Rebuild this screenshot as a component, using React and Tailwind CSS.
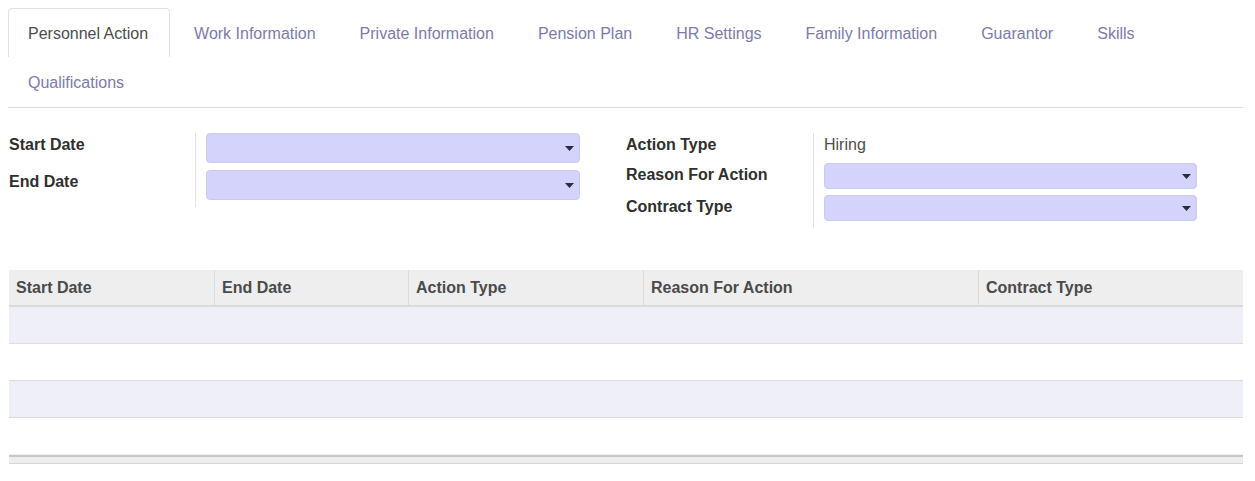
import React from "react";

const tabs = [
  "Personnel Action",
  "Work Information",
  "Private Information",
  "Pension Plan",
  "HR Settings",
  "Family Information",
  "Guarantor",
  "Skills",
  "Qualifications",
];

function Caret() {
  return (
    <svg width="9" height="5" viewBox="0 0 9 5" className="block">
      <path d="M0 0 L9 0 L4.5 5 Z" fill="#2b2b45" />
    </svg>
  );
}

function SelectBox({ h, w }) {
  return (
    <div
      className={`${h} ${w} rounded-[4px] bg-[#d3d3fb] border border-[#c9c9f2] flex items-center justify-end pr-[5px]`}
    >
      <Caret />
    </div>
  );
}

const cols = [
  { label: "Start Date", w: "w-[205px]" },
  { label: "End Date", w: "w-[194px]" },
  { label: "Action Type", w: "w-[235px]" },
  { label: "Reason For Action", w: "w-[335px]" },
  { label: "Contract Type", w: "flex-1" },
];

export default function App() {
  return (
    <div
      className="w-[1255px] h-[481px] bg-white pl-[8px] pr-[12px] pt-[8px] text-[16px]"
      style={{ fontFamily: '"Liberation Sans", Arial, sans-serif' }}
    >
      {/* Tabs */}
      <div className="flex flex-wrap border-b border-[#dcdcdc] pb-px">
        {tabs.map((t, i) => (
          <div
            key={t}
            className={
              i === 0
                ? "h-[49px] pt-[13px] pl-[19px] pr-[21px] leading-[24px] border border-b-0 border-[#e2e2e2] rounded-t-[4px] text-[#4c4c4c] mr-[4px]"
                : "h-[49px] pt-[13px] px-[19px] leading-[24px] border border-b-0 border-transparent text-[#7c7bad] mr-[4px]"
            }
          >
            {t}
          </div>
        ))}
      </div>

      {/* Form */}
      <div className="flex mt-[25px] text-[#2f2f2f]">
        {/* left group */}
        <div className="flex items-start">
          <div className="w-[187px] pl-px font-bold">
            <div className="h-[37px] pt-[2px] leading-[20px]">Start Date</div>
            <div className="h-[37px] pt-[2px] leading-[20px]">End Date</div>
          </div>
          <div className="border-l border-[#e3e3e3] pl-[10px] w-[385px]">
            <div className="h-[37px]">
              <SelectBox h="h-[30px]" w="w-[374px]" />
            </div>
            <div className="h-[37px]">
              <SelectBox h="h-[30px]" w="w-[374px]" />
            </div>
          </div>
        </div>
        {/* right group */}
        <div className="flex items-start ml-[46px]">
          <div className="w-[187px] font-bold">
            <div className="h-[30px] pt-[2px] leading-[20px]">Action Type</div>
            <div className="h-[32px] pt-[2px] leading-[20px]">Reason For Action</div>
            <div className="h-[33px] pt-[2px] leading-[20px]">Contract Type</div>
          </div>
          <div className="border-l border-[#e3e3e3] pl-[10px]">
            <div className="h-[30px] pt-[2px] leading-[20px] text-[#4c4c4c]">Hiring</div>
            <div className="h-[32px]">
              <SelectBox h="h-[26px]" w="w-[373px]" />
            </div>
            <div className="h-[33px]">
              <SelectBox h="h-[26px]" w="w-[373px]" />
            </div>
          </div>
        </div>
      </div>

      {/* Table */}
      <div className="mt-[42px] ml-px">
        <div className="flex h-[37px] bg-[#eeeeee] border-b-2 border-[#dadada] font-bold text-[#4a4a4a]">
          {cols.map((c, i) => (
            <div
              key={c.label}
              className={`${c.w} ${i > 0 ? "border-l border-[#dcdcdc]" : ""} pl-[7px] flex items-center leading-[20px]`}
            >
              {c.label}
            </div>
          ))}
        </div>
        <div className="h-[37px] bg-[#efeff8] border-b border-[#dcdce6]" />
        <div className="h-[37px] bg-white border-b border-[#dcdce6]" />
        <div className="h-[37px] bg-[#efeff8] border-b border-[#dcdce6]" />
        <div className="h-[37px] bg-white border-b border-[#f0f0f0]" />
        <div className="h-[9px] bg-[#eeeeee] border-t-2 border-[#c8c8c8] border-b border-b-[#d6d6d6]" />
      </div>
    </div>
  );
}
